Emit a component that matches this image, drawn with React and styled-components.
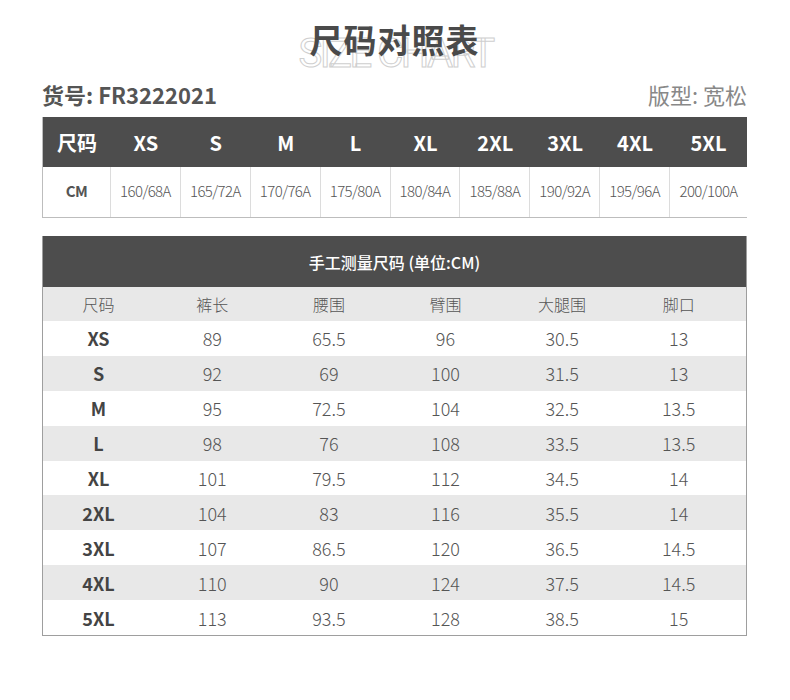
import React from "react";
import styled, { createGlobalStyle } from "styled-components";

const Global = createGlobalStyle`
  html, body { margin: 0; padding: 0; background: #fff; }
  body { font-family: "Noto Sans CJK SC", "Noto Sans", sans-serif; color: #555; }
`;

const Page = styled.div`
  width: 705px;
  padding: 0 43px 0 42px;
  display: flex;
  flex-direction: column;
`;

const TitleBox = styled.div`
  position: relative;
  height: 76px;
  display: flex;
  justify-content: center;
`;

const Ghost = styled.div`
  position: absolute;
  top: 30px;
  left: 0;
  right: 0;
  text-align: center;
  font-family: Roboto, "Open Sans", sans-serif;
  font-size: 40px;
  line-height: 48px;
  font-weight: 400;
  letter-spacing: -2.5px;
  color: #fff;
  -webkit-text-stroke: 1px #cfcfcf;
  padding-left: 2px;
`;

const Title = styled.h1`
  position: relative;
  margin: 15px 0 0;
  font-size: 33px;
  line-height: 48px;
  font-weight: 700;
  color: #4a4a4a;
  letter-spacing: 1px;
`;

const InfoRow = styled.div`
  display: flex;
  justify-content: space-between;
  align-items: center;
  height: 36px;
  margin-bottom: 5px;
`;

const Code = styled.span`
  font-size: 22px;
  font-weight: 700;
  color: #555;
`;

const Fit = styled.span`
  font-size: 22px;
  font-weight: 400;
  color: #888;
`;

const SizeGrid = styled.div`
  display: grid;
  grid-template-columns: 68px repeat(8, 1fr) 77px;
  border-left: 1px solid #bdbdbd;
  border-bottom: 1px solid #bdbdbd;
`;

const HeadCell = styled.div`
  background: #4d4d4d;
  color: #fff;
  height: 50px;
  display: flex;
  align-items: center;
  justify-content: center;
  font-size: 20px;
  font-weight: 700;
`;

const CmCell = styled.div`
  height: 47px;
  display: flex;
  align-items: center;
  justify-content: center;
  font-size: 15px;
  font-weight: ${(p) => (p.$bold ? 700 : 300)};
  color: #555;
  letter-spacing: -0.6px;
  border-right: ${(p) => (p.$last ? "none" : "1px solid #dcdcdc")};
  padding-bottom: 3px;
`;

const MeasureTable = styled.div`
  margin-top: 18px;
  border: 1px solid #9e9e9e;
  border-top: none;
`;

const MeasureHead = styled.div`
  background: #4d4d4d;
  color: #fff;
  height: 51px;
  display: flex;
  align-items: center;
  justify-content: center;
  font-size: 16px;
  font-weight: 500;
`;

const MRow = styled.div`
  display: grid;
  grid-template-columns: 111px repeat(5, 1fr);
  padding-right: 9px;
  height: ${(p) => (p.$label ? "34px" : "34.9px")};
  background: ${(p) => (p.$gray ? "#e8e8e8" : "#fff")};
  align-items: center;
`;

const MCell = styled.div`
  text-align: center;
  font-size: ${(p) => (p.$label ? "16px" : "18px")};
  font-weight: ${(p) => (p.$bold ? 700 : 300)};
  color: ${(p) => (p.$bold ? "#444" : "#555")};
`;

const sizes = ["XS", "S", "M", "L", "XL", "2XL", "3XL", "4XL", "5XL"];
const cms = ["160/68A", "165/72A", "170/76A", "175/80A", "180/84A", "185/88A", "190/92A", "195/96A", "200/100A"];
const rows = [
  ["XS", "89", "65.5", "96", "30.5", "13"],
  ["S", "92", "69", "100", "31.5", "13"],
  ["M", "95", "72.5", "104", "32.5", "13.5"],
  ["L", "98", "76", "108", "33.5", "13.5"],
  ["XL", "101", "79.5", "112", "34.5", "14"],
  ["2XL", "104", "83", "116", "35.5", "14"],
  ["3XL", "107", "86.5", "120", "36.5", "14.5"],
  ["4XL", "110", "90", "124", "37.5", "14.5"],
  ["5XL", "113", "93.5", "128", "38.5", "15"],
];
const labels = ["尺码", "裤长", "腰围", "臂围", "大腿围", "脚口"];

export default function App() {
  return (
    <Page>
      <Global />
      <TitleBox>
        <Ghost>SIZE CHART</Ghost>
        <Title>尺码对照表</Title>
      </TitleBox>
      <InfoRow>
        <Code>货号: FR3222021</Code>
        <Fit>版型: 宽松</Fit>
      </InfoRow>
      <SizeGrid>
        <HeadCell>尺码</HeadCell>
        {sizes.map((s) => (
          <HeadCell key={s}>{s}</HeadCell>
        ))}
        <CmCell $bold>CM</CmCell>
        {cms.map((c, i) => (
          <CmCell key={c} $last={i === cms.length - 1}>{c}</CmCell>
        ))}
      </SizeGrid>
      <MeasureTable>
        <MeasureHead>手工测量尺码 (单位:CM)</MeasureHead>
        <MRow $label $gray>
          {labels.map((l) => (
            <MCell key={l} $label>{l}</MCell>
          ))}
        </MRow>
        {rows.map((r, i) => (
          <MRow key={r[0]} $gray={i % 2 === 1}>
            {r.map((v, j) => (
              <MCell key={j} $bold={j === 0}>{v}</MCell>
            ))}
          </MRow>
        ))}
      </MeasureTable>
    </Page>
  );
}
